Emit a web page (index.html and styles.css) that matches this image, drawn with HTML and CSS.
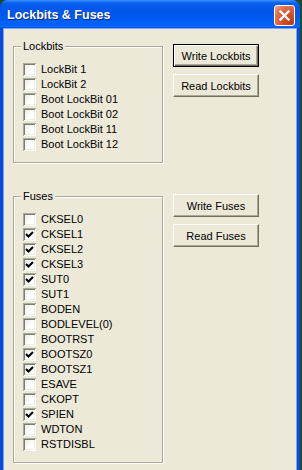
FILE: index.html
```html
<!DOCTYPE html>
<html lang="en">
<head>
    <meta charset="UTF-8">
    <title>Lockbits &amp; Fuses</title>
    <link rel="stylesheet" href="styles.css">
</head>
<body>
    <div class="window">
        <div class="titlebar">
            <span class="title">Lockbits &amp; Fuses</span>
            <button class="close" aria-label="Close">
                <svg width="19" height="19" viewBox="0 0 19 19">
                    <path d="M5.5 5.5 L13.5 13.5 M13.5 5.5 L5.5 13.5" stroke="#fff" stroke-width="2.4" stroke-linecap="square" fill="none"/>
                </svg>
            </button>
        </div>

        <div class="client">
            <!-- Lockbits -->
            <section class="panel">
                <fieldset class="group">
                    <legend>Lockbits</legend>
                    <label class="check"><span class="box"></span>LockBit 1</label>
                    <label class="check"><span class="box"></span>LockBit 2</label>
                    <label class="check"><span class="box"></span>Boot LockBit 01</label>
                    <label class="check"><span class="box"></span>Boot LockBit 02</label>
                    <label class="check"><span class="box"></span>Boot LockBit 11</label>
                    <label class="check"><span class="box"></span>Boot LockBit 12</label>
                </fieldset>
                <div class="actions">
                    <button class="btn default">Write Lockbits</button>
                    <button class="btn">Read Lockbits</button>
                </div>
            </section>

            <!-- Fuses -->
            <section class="panel">
                <fieldset class="group">
                    <legend>Fuses</legend>
                    <label class="check"><span class="box"></span>CKSEL0</label>
                    <label class="check"><span class="box"><svg viewBox="0 0 13 13"><path d="M3 6 L5.5 8.5 L10 4"/></svg></span>CKSEL1</label>
                    <label class="check"><span class="box"><svg viewBox="0 0 13 13"><path d="M3 6 L5.5 8.5 L10 4"/></svg></span>CKSEL2</label>
                    <label class="check"><span class="box"><svg viewBox="0 0 13 13"><path d="M3 6 L5.5 8.5 L10 4"/></svg></span>CKSEL3</label>
                    <label class="check"><span class="box"><svg viewBox="0 0 13 13"><path d="M3 6 L5.5 8.5 L10 4"/></svg></span>SUT0</label>
                    <label class="check"><span class="box"></span>SUT1</label>
                    <label class="check"><span class="box"></span>BODEN</label>
                    <label class="check"><span class="box"></span>BODLEVEL(0)</label>
                    <label class="check"><span class="box"></span>BOOTRST</label>
                    <label class="check"><span class="box"><svg viewBox="0 0 13 13"><path d="M3 6 L5.5 8.5 L10 4"/></svg></span>BOOTSZ0</label>
                    <label class="check"><span class="box"><svg viewBox="0 0 13 13"><path d="M3 6 L5.5 8.5 L10 4"/></svg></span>BOOTSZ1</label>
                    <label class="check"><span class="box"></span>ESAVE</label>
                    <label class="check"><span class="box"></span>CKOPT</label>
                    <label class="check"><span class="box"><svg viewBox="0 0 13 13"><path d="M3 6 L5.5 8.5 L10 4"/></svg></span>SPIEN</label>
                    <label class="check"><span class="box"></span>WDTON</label>
                    <label class="check"><span class="box"></span>RSTDISBL</label>
                </fieldset>
                <div class="actions">
                    <button class="btn">Write Fuses</button>
                    <button class="btn">Read Fuses</button>
                </div>
            </section>
        </div>
    </div>
</body>
</html>
```

FILE: styles.css
```css
/* base */
body {
    margin: 0;
    background: #1d4b2e;
    font-family: "Liberation Sans", Arial, sans-serif;
    font-size: 11px;
    color: #000;
}

/* window frame */
.window {
    width: 300px;
    height: 470px;
    display: flex;
    flex-direction: column;
    background: #0b4ad8;
    border-radius: 8px 8px 0 0;
}

.titlebar {
    height: 29px;
    flex: none;
    display: flex;
    justify-content: space-between;
    align-items: flex-start;
    padding: 0 5px 0 7px;
    border-radius: 8px 8px 0 0;
    background: linear-gradient(180deg, #3d95ff 0, #0a5ff0 10%, #0055ea 40%, #0062f8 85%, #0a66ff 92%, #0050e0 96%, #0040d0 100%);
}

.title {
    margin-top: 8px;
    color: #fff;
    font-weight: bold;
    font-size: 12.5px;
    line-height: 15px;
    text-shadow: 1px 1px 0 #0c2a8c;
}

.close {
    margin-top: 5px;
    width: 21px;
    height: 21px;
    padding: 0;
    border: 1px solid #fff;
    border-radius: 3px;
    background: radial-gradient(circle at 85% 85%, #c23a12 0, #d9552d 45%, #e2714d 70%, #f0a68c 100%);
    display: flex;
    align-items: center;
    justify-content: center;
}

/* client area */
.client {
    flex: 1;
    margin: 0 4px 4px;
    padding: 11px 0 0 9px;
    background: #ece9d8;
    box-shadow: 0 0 0 1px #7fa6f2;
}

.panel {
    display: flex;
    align-items: flex-start;
    margin-bottom: 27px;
}

/* group boxes */
.group {
    width: 150px;
    box-sizing: border-box;
    margin: 0;
    padding: 9px 0 10px 9px;
    border: 1px solid #aca899;
    box-shadow: inset 1px 1px 0 #fff, 1px 1px 0 #fff;
    min-width: 0;
}

.group legend {
    padding: 0 2px;
    margin-left: -2px;
    line-height: 13px;
    background: #ece9d8;
}

.check {
    display: flex;
    align-items: center;
    height: 15px;
    line-height: 15px;
    white-space: nowrap;
}

.box {
    width: 13px;
    height: 13px;
    flex: none;
    margin-right: 5px;
    background: linear-gradient(135deg, #e6e4da 0, #fff 60%);
    box-shadow: inset 1px 1px 0 #aca899, inset -1px -1px 0 #fff, inset 2px 2px 0 #7d7b70, inset -2px -2px 0 #f1efe2;
}

.box svg {
    display: block;
    width: 13px;
    height: 13px;
}

.box path {
    fill: none;
    stroke: #000;
    stroke-width: 2.1;
}

/* buttons */
.actions {
    display: flex;
    flex-direction: column;
    gap: 7px;
    margin: 4px 0 0 10px;
}

.btn {
    width: 86px;
    height: 23px;
    padding: 0;
    font-family: inherit;
    font-size: 11px;
    color: #000;
    background: #ece9d8;
    border: 1px solid;
    border-color: #fff #716f64 #716f64 #fff;
    box-shadow: inset -1px -1px 0 #aca899;
}

.btn.default {
    border-color: #000;
    box-shadow: inset 1px 1px 0 #fff, inset -1px -1px 0 #716f64, inset -2px -2px 0 #aca899;
}
```
